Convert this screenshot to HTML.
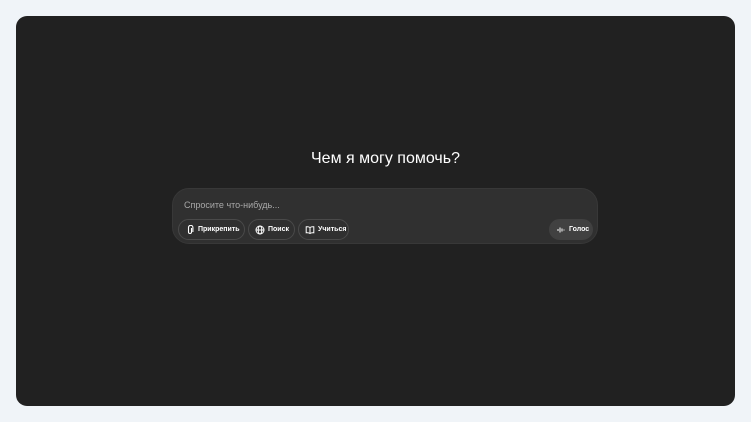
<!DOCTYPE html>
<html><head><meta charset="utf-8"><style>
*{margin:0;padding:0;box-sizing:border-box}
body{width:751px;height:422px;background:#f0f4f8;font-family:"Liberation Sans","DejaVu Sans",sans-serif;position:relative;overflow:hidden}
.panel{position:absolute;left:16px;top:16px;width:719px;height:390px;background:#212121;border-radius:11px}
h1{position:absolute;left:10px;width:751px;top:150px;text-align:center;color:#fff;font-weight:400;font-size:16px}
.box{position:absolute;left:172px;top:188px;width:426px;height:56px;background:#303030;border-radius:17px;border:1px solid #383838}
.ph{position:absolute;left:11px;top:11px;color:#a8a8a8;font-size:9px}
.btn{position:absolute;top:30px;height:21px;border:1px solid #4a4a4a;border-radius:11px;color:#fff;font-size:7px;font-weight:bold;display:flex;align-items:center;padding-left:6px;gap:3px}
.btn svg{width:10px;height:10px}
</style></head><body>
<div class="panel"></div>
<h1>Чем я могу помочь?</h1>
<div class="box">
<div class="ph">Спросите что-нибудь...</div>
<div class="btn" style="left:5px;width:67px"><svg viewBox="0 0 10 10" fill="none" stroke="#fff" stroke-width="1.1"><path d="M6.5 3v4a1.5 1.5 0 0 1-3 0V2.5a2.2 2.2 0 0 1 4.4 0V7"/></svg>Прикрепить</div>
<div class="btn" style="left:75px;width:47px"><svg viewBox="0 0 10 10" fill="none" stroke="#fff" stroke-width="1"><circle cx="5" cy="5" r="4"/><ellipse cx="5" cy="5" rx="1.8" ry="4"/><path d="M1 5h8"/></svg>Поиск</div>
<div class="btn" style="left:125px;width:51px"><svg viewBox="0 0 10 10" fill="none" stroke="#fff" stroke-width="1"><path d="M5 2.5C4 1.8 2.5 1.6 1.2 1.8v6c1.3-.2 2.8 0 3.8.7 1-.7 2.5-.9 3.8-.7v-6C7.5 1.6 6 1.8 5 2.5zM5 2.5v6"/></svg>Учиться</div>
<div class="btn" style="left:376px;width:44px;background:#414141;border-color:#414141"><svg viewBox="0 0 10 10" stroke="#fff" stroke-width="1"><path d="M2 4v2M4 2.5v5M6 3.5v3M8 4.5v1"/></svg>Голос</div>
</div>
</body></html>
